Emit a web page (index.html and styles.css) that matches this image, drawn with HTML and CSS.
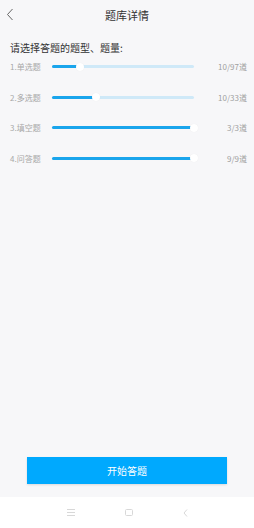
FILE: index.html
```html
<!DOCTYPE html>
<html lang="zh-CN">
<head>
<meta charset="utf-8">
<title>题库详情</title>
<link rel="stylesheet" href="styles.css">
</head>
<body>
<div class="page">
  <header class="header">
    <svg class="back" width="8" height="13" viewBox="0 0 8 13"><polyline points="6.5,1 1.5,6.5 6.5,12" fill="none" stroke="#666" stroke-width="1"/></svg>
    <div class="title">题库详情</div>
  </header>
  <div class="content">
    <div class="heading">请选择答题的题型、题量:</div>
    <div class="rows">
      <div class="row">
        <div class="label">1.单选题</div>
        <div class="track"><div class="fill" style="width:20%"></div><div class="thumb" style="left:20%"></div></div>
        <div class="count">10/97道</div>
      </div>
      <div class="row">
        <div class="label">2.多选题</div>
        <div class="track"><div class="fill" style="width:31%"></div><div class="thumb" style="left:31%"></div></div>
        <div class="count">10/33道</div>
      </div>
      <div class="row">
        <div class="label">3.填空题</div>
        <div class="track"><div class="fill" style="width:100%"></div><div class="thumb" style="left:100%"></div></div>
        <div class="count">3/3道</div>
      </div>
      <div class="row">
        <div class="label">4.问答题</div>
        <div class="track"><div class="fill" style="width:100%"></div><div class="thumb" style="left:100%"></div></div>
        <div class="count">9/9道</div>
      </div>
    </div>
  </div>
  <div class="spacer"></div>
  <button class="start">开始答题</button>
  <nav class="sysnav">
    <svg width="8" height="7" viewBox="0 0 8 7"><path d="M0 0.5H8M0 3.5H8M0 6.5H8" stroke="#d8d8d8" stroke-width="1"/></svg>
    <svg width="8" height="7" viewBox="0 0 8 7"><rect x="0.5" y="0.5" width="7" height="6" rx="1" fill="none" stroke="#d8d8d8" stroke-width="1"/></svg>
    <svg width="5" height="8" viewBox="0 0 5 8"><polyline points="4,0.5 1,4 4,7.5" fill="none" stroke="#d8d8d8" stroke-width="1"/></svg>
  </nav>
</div>
</body>
</html>
```

FILE: styles.css
```css
* { box-sizing: border-box; }
html, body {
  margin: 0;
  padding: 0;
  background: #f7f7f9;
  font-family: "Noto Sans CJK SC", "Noto Sans", sans-serif;
}
.page {
  width: 254px;
  height: 528px;
  display: flex;
  flex-direction: column;
}
.header {
  height: 30px;
  display: flex;
  align-items: center;
  justify-content: center;
  position: relative;
}
.back {
  position: absolute;
  left: 6px;
  top: 8px;
}
.title {
  font-size: 11px;
  color: #333;
  line-height: 14px;
}
.content {
  padding: 0 7px 0 10px;
}
.heading {
  padding-top: 11px;
  font-size: 10px;
  line-height: 14px;
  color: #333;
}
.rows {
  margin-top: 1.5px;
  display: flex;
  flex-direction: column;
  gap: 10.5px;
}
.row {
  height: 20px;
  display: flex;
  align-items: center;
}
.label {
  width: 42px;
  font-size: 8px;
  color: #a8a8a8;
  white-space: nowrap;
}
.track {
  flex: 1;
  height: 3px;
  background: #cfe9f8;
  position: relative;
  border-radius: 1.5px;
}
.fill {
  height: 3px;
  background: #1aa5ec;
  border-radius: 1.5px;
}
.thumb {
  position: absolute;
  top: 50%;
  width: 8px;
  height: 8px;
  margin: -4px 0 0 -4px;
  border-radius: 50%;
  background: #fff;
  box-shadow: 0 0 1px rgba(0,0,0,0.08);
}
.count {
  width: 53px;
  text-align: right;
  font-size: 8px;
  color: #a0a0a0;
  white-space: nowrap;
}
.spacer { flex: 1; }
.start {
  margin: 0 27px;
  height: 27px;
  border: none;
  background: #00a9fe;
  color: #fff;
  font-family: inherit;
  font-size: 10px;
  box-shadow: 0 1px 2px rgba(0,0,0,0.12);
  padding: 0;
}
.sysnav {
  margin-top: 13px;
  height: 31px;
  background: #fff;
  display: flex;
  align-items: center;
  justify-content: center;
  gap: 50px;
}
```
